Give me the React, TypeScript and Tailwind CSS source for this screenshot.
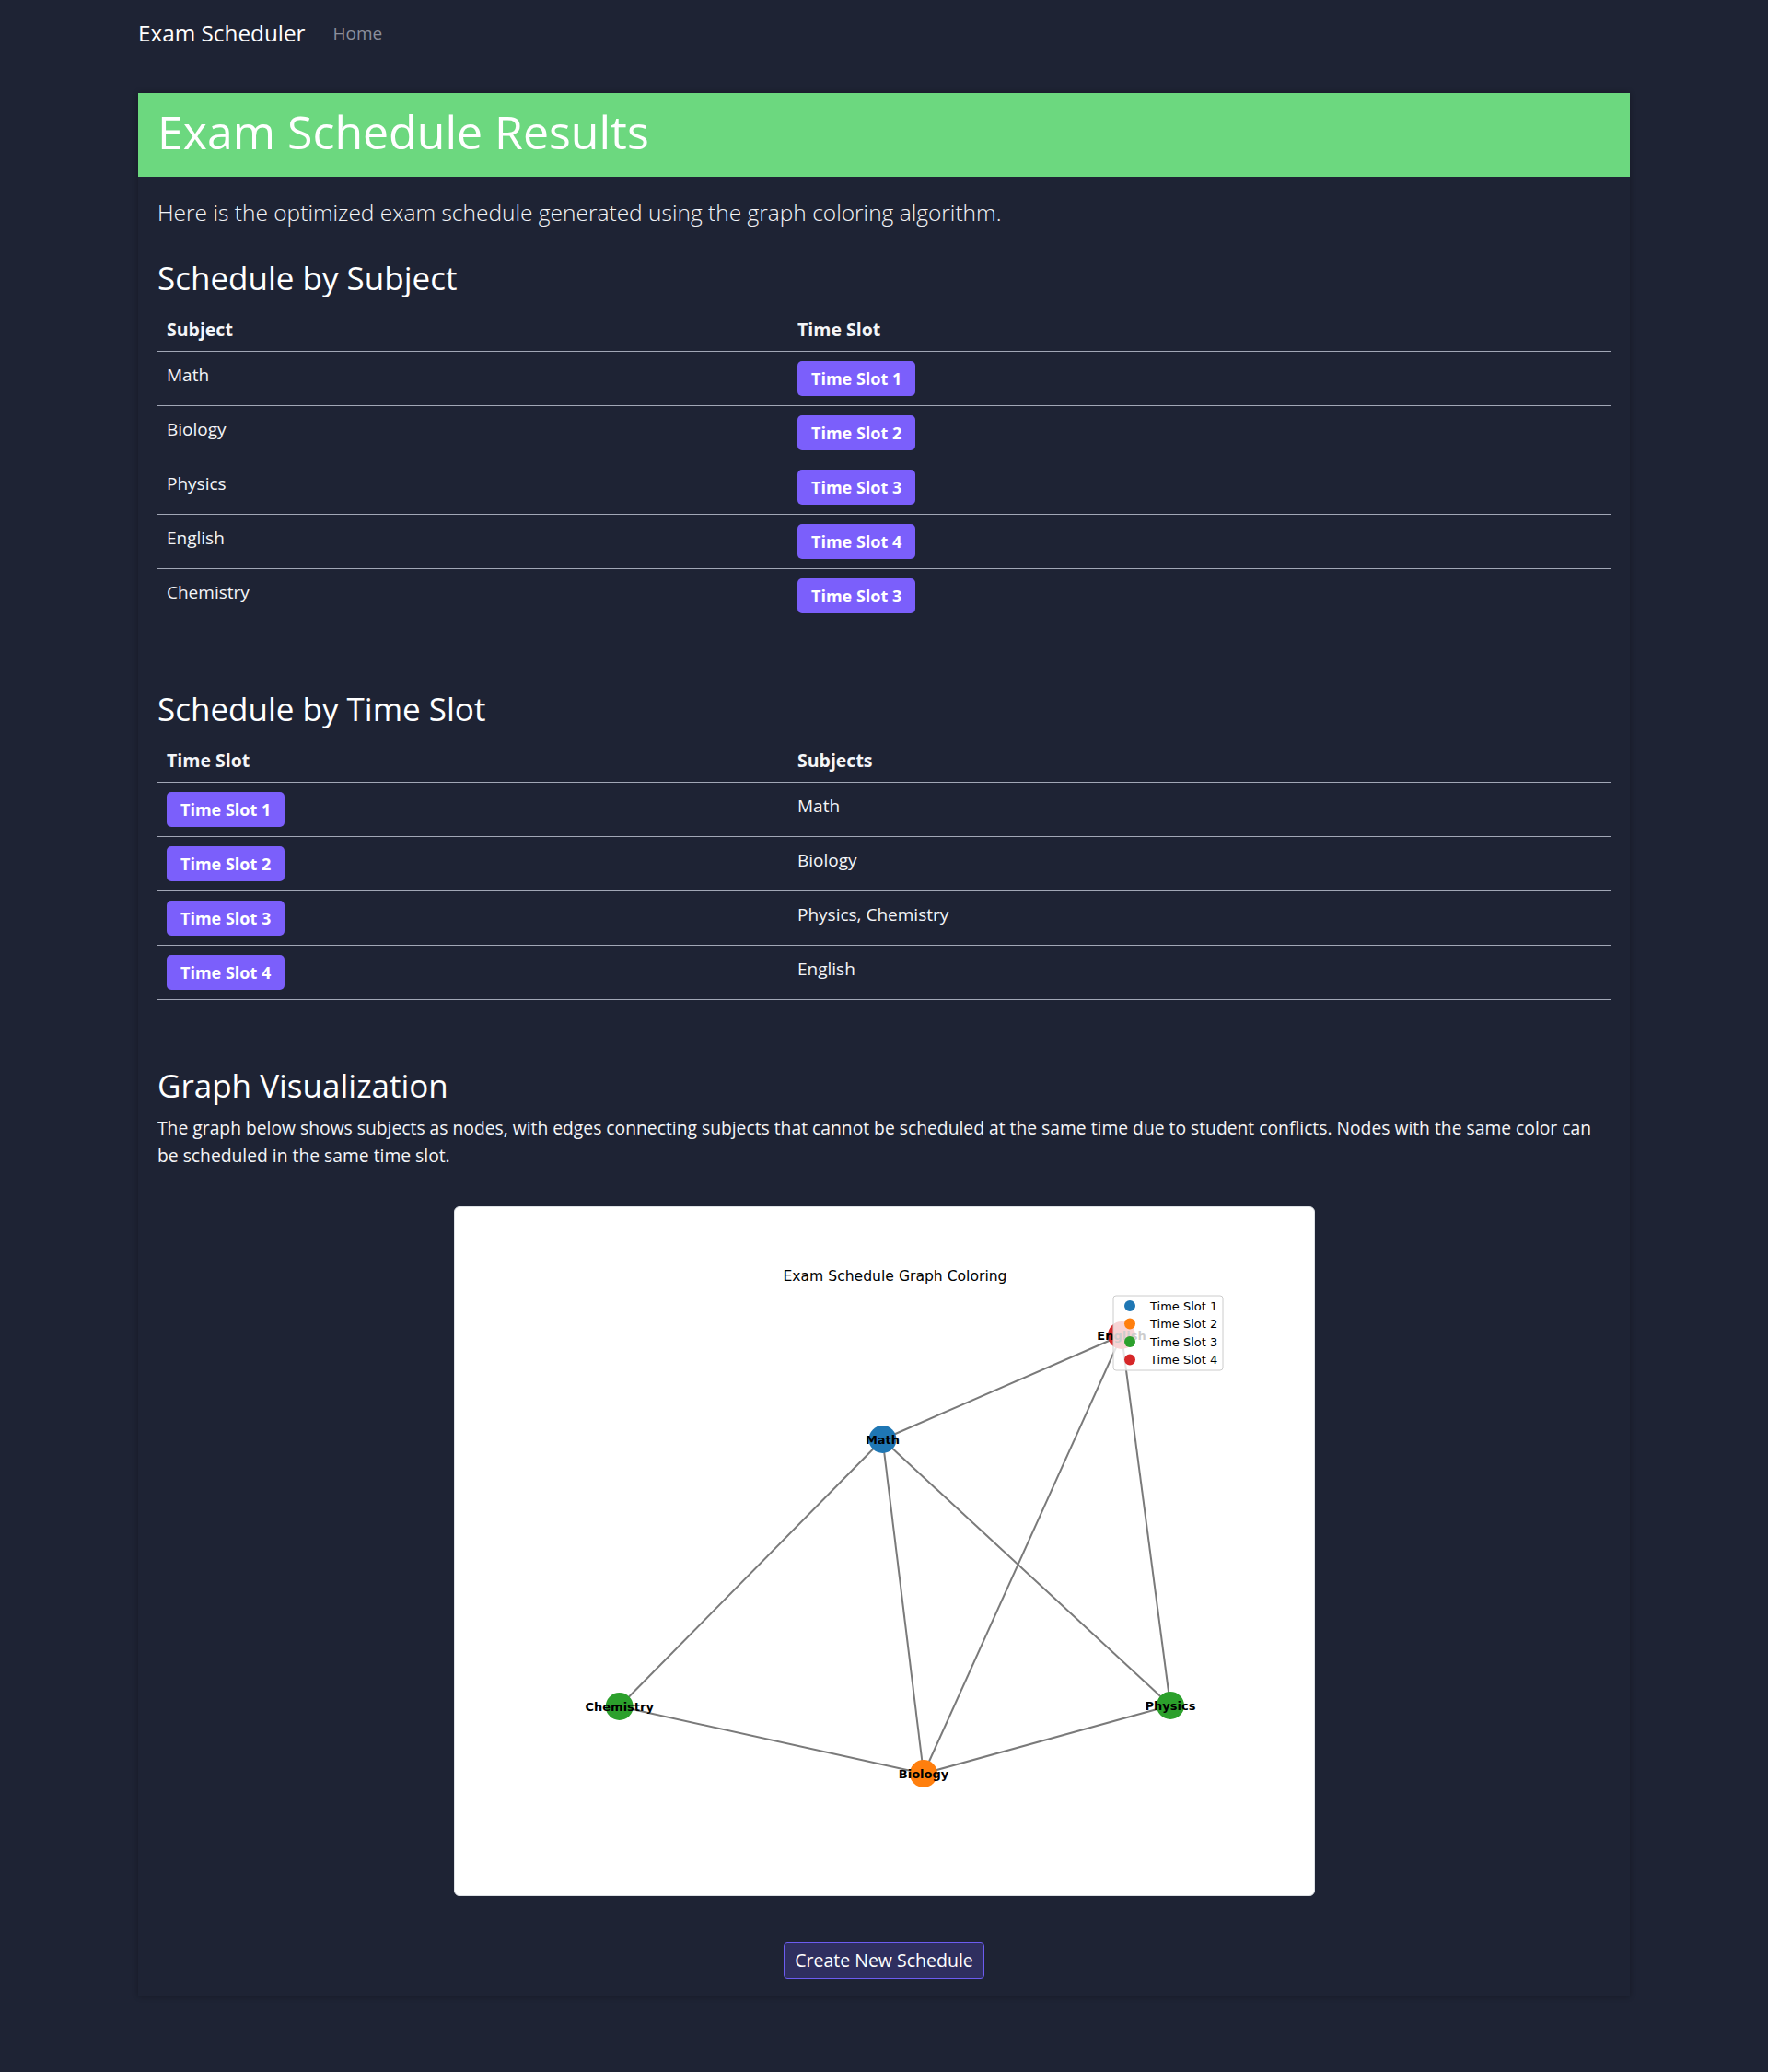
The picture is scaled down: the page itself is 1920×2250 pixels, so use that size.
import React from "react";

const slotColors = ["#1f77b4", "#ff7f0e", "#2ca02c", "#d62728"];

const bySubject = [
  { subject: "Math", slot: 1 },
  { subject: "Biology", slot: 2 },
  { subject: "Physics", slot: 3 },
  { subject: "English", slot: 4 },
  { subject: "Chemistry", slot: 3 },
];

const bySlot = [
  { slot: 1, subjects: "Math" },
  { slot: 2, subjects: "Biology" },
  { slot: 3, subjects: "Physics, Chemistry" },
  { slot: 4, subjects: "English" },
];

// graph coordinates are in the picture's own pixels
const nodes: Record<string, { x: number; y: number; slot: number }> = {
  Math: { x: 464.5, y: 252, slot: 1 },
  English: { x: 724, y: 139, slot: 4 },
  Chemistry: { x: 178.7, y: 542, slot: 3 },
  Biology: { x: 509, y: 615, slot: 2 },
  Physics: { x: 777, y: 541, slot: 3 },
};

const edges: [string, string][] = [
  ["Math", "English"],
  ["Math", "Chemistry"],
  ["Math", "Biology"],
  ["Math", "Physics"],
  ["English", "Biology"],
  ["English", "Physics"],
  ["Chemistry", "Biology"],
  ["Biology", "Physics"],
];

function Badge({ slot }: { slot: number }) {
  return (
    <span className="inline-block h-[38px] rounded-[5px] bg-[#7b5ffb] px-[15px] text-[18px] font-bold leading-[38px] text-white">
      Time Slot {slot}
    </span>
  );
}

function SectionTitle({ children, className = "" }: { children: React.ReactNode; className?: string }) {
  return <h3 className={"text-[35px] font-medium leading-[40px] text-white " + className}>{children}</h3>;
}

function ScheduleTable({
  headers,
  rows,
}: {
  headers: [string, string];
  rows: React.ReactNode[][];
}) {
  return (
    <table className="mt-[12px] w-full border-collapse text-left">
      <thead>
        <tr className="border-b border-[#a2a7b6]">
          <th className="w-[685px] px-[10px] py-[10px] text-[19.5px] font-bold leading-[27px]">{headers[0]}</th>
          <th className="px-[10px] py-[10px] text-[19.5px] font-bold leading-[27px]">{headers[1]}</th>
        </tr>
      </thead>
      <tbody>
        {rows.map((r, i) => (
          <tr key={i} className="border-b border-[#a2a7b6]">
            {r.map((c, j) => (
              <td key={j} className="h-[59px] px-[10px] pt-[10px] align-top text-[19px] leading-[30px]">
                {c}
              </td>
            ))}
          </tr>
        ))}
      </tbody>
    </table>
  );
}

function GraphPicture() {
  return (
    <div className="mx-auto mt-[40px] h-[749px] w-[935px] overflow-hidden rounded-[6px] border border-[#dee2e6] bg-white">
      <svg width="933" height="747" viewBox="0 0 933 747" className="block font-['DejaVu_Sans',sans-serif]">
        <text x="478" y="75" textAnchor="middle" dominantBaseline="central" fontSize="15.6" fill="#000">
          Exam Schedule Graph Coloring
        </text>
        {edges.map(([a, b]) => (
          <line
            key={a + b}
            x1={nodes[a].x}
            y1={nodes[a].y}
            x2={nodes[b].x}
            y2={nodes[b].y}
            stroke="#7a7a7a"
            strokeWidth="2"
          />
        ))}
        {Object.entries(nodes).map(([name, n]) => (
          <circle key={name} cx={n.x} cy={n.y} r="15" fill={slotColors[n.slot - 1]} />
        ))}
        {Object.entries(nodes).map(([name, n]) => (
          <text
            key={name}
            x={n.x}
            y={n.y}
            textAnchor="middle"
            dominantBaseline="central"
            fontSize="13"
            fontWeight="bold"
            fill="#000"
          >
            {name}
          </text>
        ))}
        <rect x="715" y="96" width="119" height="81" rx="3" fill="#fff" fillOpacity="0.8" stroke="#cccccc" />
        {slotColors.map((c, i) => (
          <g key={c}>
            <circle cx="733" cy={107 + i * 19.5} r="6" fill={c} />
            <text x="755" y={107 + i * 19.5} dominantBaseline="central" fontSize="13" fill="#000">
              Time Slot {i + 1}
            </text>
          </g>
        ))}
      </svg>
    </div>
  );
}

export default function App() {
  return (
    <div className="min-h-[2250px] bg-[#1e2334] font-['Open_Sans',sans-serif] text-[#f4f5f8]">
      <nav className="mx-auto flex h-[72px] w-[1620px] items-center">
        <span className="text-[24.3px] text-white">Exam Scheduler</span>
        <a className="ml-[30px] text-[19px] text-[#8b8f9c]">Home</a>
      </nav>

      <div className="mx-auto mt-[29px] w-[1620px] bg-[#1e2334] shadow-[0_0_6px_rgba(0,0,0,0.3)]">
        <div className="flex h-[91px] items-center bg-[#6cd87f] px-[21px] pb-[8px]">
          <h1 className="text-[50px] font-medium leading-[60px] text-white">Exam Schedule Results</h1>
        </div>

        <div className="px-[21px] pb-[19px] pt-[24px]">
          <p className="text-[24.5px] font-light leading-[30px]">
            Here is the optimized exam schedule generated using the graph coloring algorithm.
          </p>

          <SectionTitle className="mt-[36px]">Schedule by Subject</SectionTitle>
          <ScheduleTable
            headers={["Subject", "Time Slot"]}
            rows={bySubject.map((r) => [r.subject, <Badge slot={r.slot} />])}
          />

          <SectionTitle className="mt-[73px]">Schedule by Time Slot</SectionTitle>
          <ScheduleTable
            headers={["Time Slot", "Subjects"]}
            rows={bySlot.map((r) => [<Badge slot={r.slot} />, r.subjects])}
          />

          <SectionTitle className="mt-[73px]">Graph Visualization</SectionTitle>
          <p className="mt-[11px] text-[19.3px] leading-[30px]">
            The graph below shows subjects as nodes, with edges connecting subjects that cannot be scheduled at the same
            time due to student conflicts. Nodes with the same color can be scheduled in the same time slot.
          </p>

          <GraphPicture />

          <div className="mt-[50px] flex justify-center">
            <button className="h-[40px] w-[218px] rounded-[4px] border border-[#6c5cf0] bg-[#2f2f5f] text-[19.5px] text-white">
              Create New Schedule
            </button>
          </div>
        </div>
      </div>
    </div>
  );
}
